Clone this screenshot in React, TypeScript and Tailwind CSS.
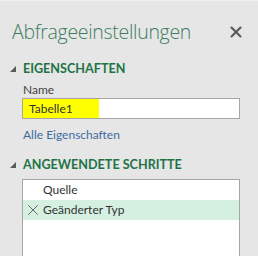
import { X } from 'lucide-react';

function Triangle() {
  return (
    <svg width="6" height="6" viewBox="0 0 6 6" className="flex-shrink-0">
      <polygon points="6,0 6,6 0,6" fill="#595959" />
    </svg>
  );
}

export default function App() {
  return (
    <div
      className="w-[258px] h-[256px] bg-[#e6e6e6] border-t border-[#f0f0f0] overflow-hidden text-[#444]"
      style={{ fontFamily: 'Lato, "Open Sans", sans-serif' }}
    >
      {/* Header */}
      <div className="flex items-center justify-between pl-[12px] pr-[13px] pt-[14px] h-[48px]">
        <h1
          className="text-[19.5px] font-light text-[#3b7d5d] tracking-[-0.3px] leading-none"
          style={{ fontFamily: '"Open Sans", sans-serif' }}
        >
          Abfrageeinstellungen
        </h1>
        <X size={18} strokeWidth={2.8} className="text-[#5a5a5a]" />
      </div>

      {/* Eigenschaften */}
      <div className="mt-[11px] flex items-center gap-[7px] pl-[10px] h-[18px]">
        <Triangle />
        <span className="text-[12.6px] font-bold text-[#217346]">EIGENSCHAFTEN</span>
      </div>
      <div className="pl-[23px] mt-[4px] text-[12px] text-[#444] leading-[16px]">Name</div>
      <div className="ml-[22px] mr-[18px] h-[21px] border border-[#a6a6a6] bg-white flex">
        <div className="w-[76px] bg-[#ffff00] pl-[6px] text-[12px] text-[#333] leading-[19px]">Tabelle1</div>
      </div>
      <div className="pl-[23px] mt-[7px] text-[12px] text-[#3e6ba0] leading-[18px]">Alle Eigenschaften</div>

      {/* Angewendete Schritte */}
      <div className="mt-[12px] flex items-center gap-[7px] pl-[10px] h-[18px]">
        <Triangle />
        <span className="text-[12.6px] font-bold text-[#217346]">ANGEWENDETE SCHRITTE</span>
      </div>
      <div className="ml-[22px] mr-[18px] mt-[5px] h-[100px] border border-[#a6a6a6] bg-white">
        <div className="h-[20px] flex items-center pl-[20px] text-[12px] text-[#333]">Quelle</div>
        <div className="h-[20px] flex items-center bg-[#d5efe1] text-[12px] text-[#333]">
          <span className="w-[20px] flex justify-center">
            <X size={18} strokeWidth={1.3} className="text-[#666]" />
          </span>
          Geänderter Typ
        </div>
      </div>
    </div>
  );
}
